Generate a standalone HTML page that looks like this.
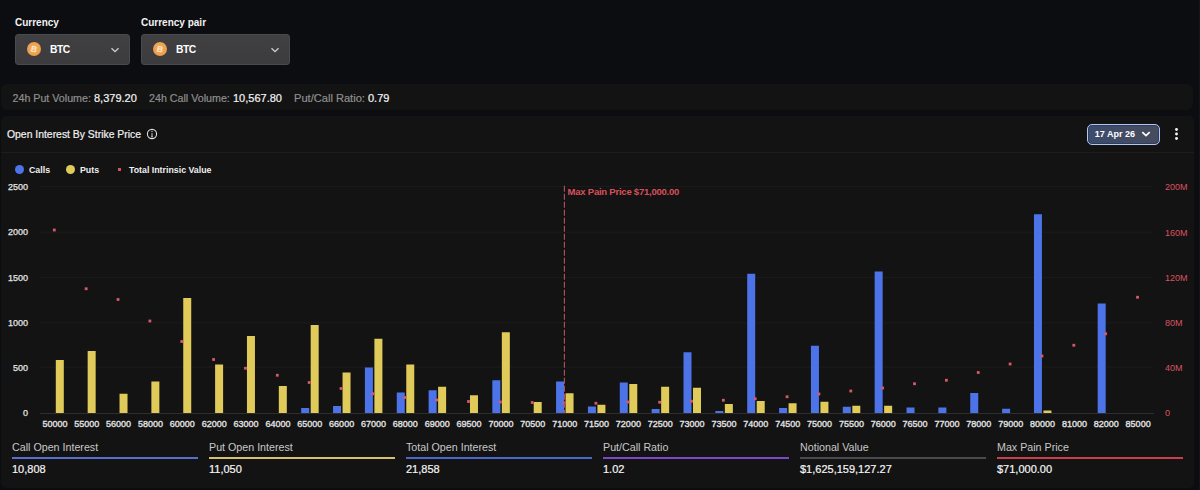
<!DOCTYPE html>
<html><head><meta charset="utf-8"><style>
*{margin:0;padding:0;box-sizing:border-box}
html,body{width:1200px;height:490px;overflow:hidden;background:#0c0d10;font-family:"Liberation Sans",sans-serif;color:#fff}
.abs{position:absolute}
.lab{position:absolute;font-size:10px;font-weight:bold;color:#f2f2f2;line-height:12px;white-space:nowrap}
.dd{position:absolute;top:34px;height:30.5px;border-radius:3px;background:linear-gradient(180deg,#403f42,#3c3b3e);border:1px solid #4a494c}
.coin{position:absolute;left:11px;top:7px;width:14px;height:14px;border-radius:50%;background:radial-gradient(circle at 50% 45%,#f4b066,#e8933a)}
.coin span{position:absolute;left:0;top:0;width:14px;height:14px;line-height:14px;text-align:center;font-size:8.5px;font-weight:bold;color:#fde8cc;transform:rotate(14deg)}
.ddt{position:absolute;left:34px;top:8.5px;font-size:10.3px;letter-spacing:-0.45px;font-weight:bold;color:#fff;line-height:12px}
.chev{position:absolute;top:12px}
.bar{position:absolute;left:1px;top:84px;width:1192px;height:26px;background:#131313;border-radius:6px}
.bar span{position:absolute;top:8px;font-size:11px;line-height:13px;white-space:nowrap}
.g{font-size:10.7px !important;color:#8f8f8f;-webkit-text-stroke:0.2px #8f8f8f} .w{color:#f4f4f4;-webkit-text-stroke:0.2px #f4f4f4}
.panel{position:absolute;left:1px;top:116px;width:1193px;height:372px;background:#131313;border-radius:5px}
.title{position:absolute;left:7px;top:128px;font-size:10.4px;line-height:13px;color:#f0f0f0;white-space:nowrap;-webkit-text-stroke:0.2px #f0f0f0}
.leg{position:absolute;top:165px;font-size:8.8px;font-weight:bold;color:#f0f0f0;line-height:11px;white-space:nowrap}
.xl{position:absolute;top:418.5px;width:40px;text-align:center;font-size:9px;color:#e2e2e2;line-height:11px;-webkit-text-stroke:0.35px #e2e2e2}
.yl{position:absolute;left:0;width:28px;text-align:right;font-size:9px;color:#e6e6e6;line-height:12px;-webkit-text-stroke:0.25px #e6e6e6}
.rl{position:absolute;left:1165px;font-size:9px;color:#dc5262;line-height:12px}
.st{position:absolute;top:440px;width:186px}
.stl{position:absolute;left:0;top:1px;font-size:10.7px;color:#c8c8c8;line-height:13px;white-space:nowrap}
.stb{position:absolute;left:0;top:17px;width:186px;height:2px}
.stv{position:absolute;left:0;top:23px;font-size:11px;color:#f6f6f6;line-height:13px;white-space:nowrap;-webkit-text-stroke:0.2px #f6f6f6}
.date{position:absolute;left:1087px;top:124px;width:73px;height:21px;border:1.8px solid #b2c6ee;border-radius:5px;background:linear-gradient(90deg,#3d4c6c,#474c5c);box-shadow:inset 0 0 0 1px #2c3c68}
.date span{position:absolute;left:6.8px;top:3.8px;font-size:9px;font-weight:bold;color:#fff;line-height:11px}
</style></head><body>
<div class="lab" style="left:15px;top:17px">Currency</div>
<div class="lab" style="left:141px;top:17px">Currency pair</div>
<div class="dd" style="left:15px;width:115px"><div class="coin"><span>B</span></div><div class="ddt">BTC</div>
<svg class="chev" style="left:94px" width="10" height="6" viewBox="0 0 10 6"><path d="M1.5 1.2 L5 4.6 L8.5 1.2" fill="none" stroke="#d0d0d0" stroke-width="1.3"/></svg></div>
<div class="dd" style="left:141px;width:149px"><div class="coin"><span>B</span></div><div class="ddt">BTC</div>
<svg class="chev" style="left:128px" width="10" height="6" viewBox="0 0 10 6"><path d="M1.5 1.2 L5 4.6 L8.5 1.2" fill="none" stroke="#d0d0d0" stroke-width="1.3"/></svg></div>

<div class="bar">
<span class="g" style="left:11.5px">24h Put Volume:</span><span class="w" style="left:93px">8,379.20</span>
<span class="g" style="left:148px">24h Call Volume:</span><span class="w" style="left:232px">10,567.80</span>
<span class="g" style="left:293px;font-size:11.1px !important">Put/Call Ratio:</span><span class="w" style="left:367px">0.79</span>
</div>

<div class="panel"></div>
<div class="title">Open Interest By Strike Price</div>
<svg class="abs" style="left:146px;top:128px" width="12" height="12" viewBox="0 0 12 12"><circle cx="6" cy="6" r="4.6" fill="none" stroke="#e0e0e0" stroke-width="1.1"/><circle cx="6" cy="3.6" r="0.65" fill="#e6e6e6"/><path d="M6 5.2 V8.8 M5.2 8.9 H6.8" stroke="#e6e6e6" stroke-width="0.9" fill="none"/></svg>
<div class="date"><span>17 Apr 26</span><svg class="abs" style="left:52.5px;top:6px" width="10" height="6" viewBox="0 0 10 6"><path d="M1.3 1.2 L5 4.7 L8.7 1.2" fill="none" stroke="#fff" stroke-width="1.7"/></svg></div>
<svg class="abs" style="left:1174px;top:126.5px" width="5" height="14"><circle cx="2.5" cy="2.5" r="1.45" fill="#f4f4f4"/><circle cx="2.5" cy="7" r="1.45" fill="#f4f4f4"/><circle cx="2.5" cy="11.5" r="1.45" fill="#f4f4f4"/></svg>
<div class="abs" style="left:1px;top:152px;width:1193px;height:1px;background:#1d1d1d"></div>

<svg class="abs" style="left:15px;top:165px" width="9" height="9"><circle cx="4.5" cy="4.5" r="4.5" fill="#4c74e8"/></svg>
<div class="leg" style="left:29px">Calls</div>
<svg class="abs" style="left:66px;top:165px" width="9" height="9"><circle cx="4.5" cy="4.5" r="4.5" fill="#dfca5a"/></svg>
<div class="leg" style="left:80px">Puts</div>
<div class="abs" style="left:118px;top:168px;width:3px;height:3px;background:#d8505a"></div>
<div class="leg" style="left:129px">Total Intrinsic Value</div>

<div class="abs" style="left:567.6px;top:185.5px;font-size:9.5px;letter-spacing:-0.23px;font-weight:bold;color:#d9505c;line-height:11px;white-space:nowrap">Max Pain Price $71,000.00</div>

<div class="yl" style="top:406.70px">0</div>
<div class="yl" style="top:361.84px">500</div>
<div class="yl" style="top:316.98px">1000</div>
<div class="yl" style="top:271.62px">1500</div>
<div class="yl" style="top:226.26px">2000</div>
<div class="yl" style="top:180.90px">2500</div>
<div class="rl" style="top:407.20px">0</div>
<div class="rl" style="top:361.84px">40M</div>
<div class="rl" style="top:317.48px">80M</div>
<div class="rl" style="top:272.12px">120M</div>
<div class="rl" style="top:226.76px">160M</div>
<div class="rl" style="top:181.40px">200M</div>
<svg class="abs" style="left:0;top:0" width="1200" height="490">
<rect x="40" y="366.70" width="1113" height="1" fill="#1c1c1c"/>
<rect x="40" y="322.30" width="1113" height="1" fill="#1c1c1c"/>
<rect x="40" y="276.90" width="1113" height="1" fill="#1c1c1c"/>
<rect x="40" y="231.70" width="1113" height="1" fill="#1c1c1c"/>
<rect x="40" y="185.90" width="1113" height="1" fill="#1c1c1c"/>
<rect x="40" y="413" width="1114" height="1" fill="#2e2e2e"/>
<rect x="55.80" y="360.00" width="8" height="53.00" fill="#dfca5a"/>
<rect x="87.66" y="351.00" width="8" height="62.00" fill="#dfca5a"/>
<rect x="119.52" y="393.75" width="8" height="19.25" fill="#dfca5a"/>
<rect x="151.38" y="381.50" width="8" height="31.50" fill="#dfca5a"/>
<rect x="183.24" y="298.00" width="8" height="115.00" fill="#dfca5a"/>
<rect x="215.10" y="364.50" width="8" height="48.50" fill="#dfca5a"/>
<rect x="246.96" y="336.00" width="8" height="77.00" fill="#dfca5a"/>
<rect x="278.82" y="386.00" width="8" height="27.00" fill="#dfca5a"/>
<rect x="301.18" y="408.00" width="8" height="5.00" fill="#4c74e8"/>
<rect x="310.68" y="325.00" width="8" height="88.00" fill="#dfca5a"/>
<rect x="333.04" y="406.00" width="8" height="7.00" fill="#4c74e8"/>
<rect x="342.54" y="372.50" width="8" height="40.50" fill="#dfca5a"/>
<rect x="364.90" y="367.50" width="8" height="45.50" fill="#4c74e8"/>
<rect x="374.40" y="338.75" width="8" height="74.25" fill="#dfca5a"/>
<rect x="396.76" y="392.50" width="8" height="20.50" fill="#4c74e8"/>
<rect x="406.26" y="364.50" width="8" height="48.50" fill="#dfca5a"/>
<rect x="428.62" y="390.25" width="8" height="22.75" fill="#4c74e8"/>
<rect x="438.12" y="386.75" width="8" height="26.25" fill="#dfca5a"/>
<rect x="469.98" y="395.25" width="8" height="17.75" fill="#dfca5a"/>
<rect x="492.34" y="380.25" width="8" height="32.75" fill="#4c74e8"/>
<rect x="501.84" y="332.25" width="8" height="80.75" fill="#dfca5a"/>
<rect x="533.70" y="402.00" width="8" height="11.00" fill="#dfca5a"/>
<rect x="556.06" y="381.50" width="8" height="31.50" fill="#4c74e8"/>
<rect x="565.56" y="393.25" width="8" height="19.75" fill="#dfca5a"/>
<rect x="587.92" y="406.50" width="8" height="6.50" fill="#4c74e8"/>
<rect x="597.42" y="404.75" width="8" height="8.25" fill="#dfca5a"/>
<rect x="619.78" y="382.50" width="8" height="30.50" fill="#4c74e8"/>
<rect x="629.28" y="384.00" width="8" height="29.00" fill="#dfca5a"/>
<rect x="651.64" y="409.00" width="8" height="4.00" fill="#4c74e8"/>
<rect x="661.14" y="386.75" width="8" height="26.25" fill="#dfca5a"/>
<rect x="683.50" y="352.25" width="8" height="60.75" fill="#4c74e8"/>
<rect x="693.00" y="387.75" width="8" height="25.25" fill="#dfca5a"/>
<rect x="715.36" y="411.00" width="8" height="2.00" fill="#4c74e8"/>
<rect x="724.86" y="404.00" width="8" height="9.00" fill="#dfca5a"/>
<rect x="747.22" y="273.75" width="8" height="139.25" fill="#4c74e8"/>
<rect x="756.72" y="401.00" width="8" height="12.00" fill="#dfca5a"/>
<rect x="779.08" y="408.00" width="8" height="5.00" fill="#4c74e8"/>
<rect x="788.58" y="403.25" width="8" height="9.75" fill="#dfca5a"/>
<rect x="810.94" y="345.75" width="8" height="67.25" fill="#4c74e8"/>
<rect x="820.44" y="401.75" width="8" height="11.25" fill="#dfca5a"/>
<rect x="842.80" y="406.75" width="8" height="6.25" fill="#4c74e8"/>
<rect x="852.30" y="405.75" width="8" height="7.25" fill="#dfca5a"/>
<rect x="874.66" y="271.50" width="8" height="141.50" fill="#4c74e8"/>
<rect x="884.16" y="405.75" width="8" height="7.25" fill="#dfca5a"/>
<rect x="906.52" y="407.50" width="8" height="5.50" fill="#4c74e8"/>
<rect x="938.38" y="407.50" width="8" height="5.50" fill="#4c74e8"/>
<rect x="970.24" y="393.00" width="8" height="20.00" fill="#4c74e8"/>
<rect x="1002.10" y="408.75" width="8" height="4.25" fill="#4c74e8"/>
<rect x="1033.96" y="214.25" width="8" height="198.75" fill="#4c74e8"/>
<rect x="1043.46" y="410.50" width="8" height="2.50" fill="#dfca5a"/>
<rect x="1097.68" y="303.50" width="8" height="109.50" fill="#4c74e8"/>
<rect x="52.90" y="228.60" width="2.8" height="2.8" fill="#d95868"/>
<rect x="84.76" y="287.35" width="2.8" height="2.8" fill="#d95868"/>
<rect x="116.62" y="298.10" width="2.8" height="2.8" fill="#d95868"/>
<rect x="148.48" y="319.60" width="2.8" height="2.8" fill="#d95868"/>
<rect x="180.34" y="340.10" width="2.8" height="2.8" fill="#d95868"/>
<rect x="212.20" y="358.10" width="2.8" height="2.8" fill="#d95868"/>
<rect x="244.06" y="366.85" width="2.8" height="2.8" fill="#d95868"/>
<rect x="275.92" y="373.85" width="2.8" height="2.8" fill="#d95868"/>
<rect x="307.78" y="381.10" width="2.8" height="2.8" fill="#d95868"/>
<rect x="339.64" y="387.10" width="2.8" height="2.8" fill="#d95868"/>
<rect x="371.50" y="392.35" width="2.8" height="2.8" fill="#d95868"/>
<rect x="403.36" y="396.10" width="2.8" height="2.8" fill="#d95868"/>
<rect x="435.22" y="398.60" width="2.8" height="2.8" fill="#d95868"/>
<rect x="467.08" y="400.10" width="2.8" height="2.8" fill="#d95868"/>
<rect x="498.94" y="400.60" width="2.8" height="2.8" fill="#d95868"/>
<rect x="530.80" y="401.10" width="2.8" height="2.8" fill="#d95868"/>
<rect x="562.66" y="401.35" width="2.8" height="2.8" fill="#d95868"/>
<rect x="594.52" y="401.85" width="2.8" height="2.8" fill="#d95868"/>
<rect x="626.38" y="400.60" width="2.8" height="2.8" fill="#d95868"/>
<rect x="658.24" y="400.85" width="2.8" height="2.8" fill="#d95868"/>
<rect x="690.10" y="399.85" width="2.8" height="2.8" fill="#d95868"/>
<rect x="721.96" y="398.85" width="2.8" height="2.8" fill="#d95868"/>
<rect x="753.82" y="397.35" width="2.8" height="2.8" fill="#d95868"/>
<rect x="785.68" y="395.35" width="2.8" height="2.8" fill="#d95868"/>
<rect x="817.54" y="392.60" width="2.8" height="2.8" fill="#d95868"/>
<rect x="849.40" y="389.60" width="2.8" height="2.8" fill="#d95868"/>
<rect x="881.26" y="386.60" width="2.8" height="2.8" fill="#d95868"/>
<rect x="913.12" y="382.35" width="2.8" height="2.8" fill="#d95868"/>
<rect x="944.98" y="378.85" width="2.8" height="2.8" fill="#d95868"/>
<rect x="976.84" y="371.10" width="2.8" height="2.8" fill="#d95868"/>
<rect x="1008.70" y="362.60" width="2.8" height="2.8" fill="#d95868"/>
<rect x="1040.56" y="354.60" width="2.8" height="2.8" fill="#d95868"/>
<rect x="1072.42" y="343.85" width="2.8" height="2.8" fill="#d95868"/>
<rect x="1104.28" y="332.35" width="2.8" height="2.8" fill="#d95868"/>
<rect x="1136.14" y="295.85" width="2.8" height="2.8" fill="#d95868"/>
<line x1="564.4" y1="185.8" x2="564.4" y2="413" stroke="#b8505e" stroke-width="1.1" stroke-dasharray="6,2"/>
</svg>
<div class="xl" style="left:34.90px">50000</div>
<div class="xl" style="left:66.76px">55000</div>
<div class="xl" style="left:98.62px">56000</div>
<div class="xl" style="left:130.48px">58000</div>
<div class="xl" style="left:162.34px">60000</div>
<div class="xl" style="left:194.20px">62000</div>
<div class="xl" style="left:226.06px">63000</div>
<div class="xl" style="left:257.92px">64000</div>
<div class="xl" style="left:289.78px">65000</div>
<div class="xl" style="left:321.64px">66000</div>
<div class="xl" style="left:353.50px">67000</div>
<div class="xl" style="left:385.36px">68000</div>
<div class="xl" style="left:417.22px">69000</div>
<div class="xl" style="left:449.08px">69500</div>
<div class="xl" style="left:480.94px">70000</div>
<div class="xl" style="left:512.80px">70500</div>
<div class="xl" style="left:544.66px">71000</div>
<div class="xl" style="left:576.52px">71500</div>
<div class="xl" style="left:608.38px">72000</div>
<div class="xl" style="left:640.24px">72500</div>
<div class="xl" style="left:672.10px">73000</div>
<div class="xl" style="left:703.96px">73500</div>
<div class="xl" style="left:735.82px">74000</div>
<div class="xl" style="left:767.68px">74500</div>
<div class="xl" style="left:799.54px">75000</div>
<div class="xl" style="left:831.40px">75500</div>
<div class="xl" style="left:863.26px">76000</div>
<div class="xl" style="left:895.12px">76500</div>
<div class="xl" style="left:926.98px">77000</div>
<div class="xl" style="left:958.84px">78000</div>
<div class="xl" style="left:990.70px">79000</div>
<div class="xl" style="left:1022.56px">80000</div>
<div class="xl" style="left:1054.42px">81000</div>
<div class="xl" style="left:1086.28px">82000</div>
<div class="xl" style="left:1118.14px">85000</div>
<div class="st" style="left:12px"><div class="stl">Call Open Interest</div><div class="stb" style="background:#5670cc"></div><div class="stv">10,808</div></div>
<div class="st" style="left:209px"><div class="stl">Put Open Interest</div><div class="stb" style="background:#d8c070"></div><div class="stv">11,050</div></div>
<div class="st" style="left:406px"><div class="stl">Total Open Interest</div><div class="stb" style="background:#4a68cc"></div><div class="stv">21,858</div></div>
<div class="st" style="left:603px"><div class="stl">Put/Call Ratio</div><div class="stb" style="background:#7e46c8"></div><div class="stv">1.02</div></div>
<div class="st" style="left:800px"><div class="stl">Notional Value</div><div class="stb" style="background:#4a4a4e"></div><div class="stv">$1,625,159,127.27</div></div>
<div class="st" style="left:997px"><div class="stl">Max Pain Price</div><div class="stb" style="background:#c8404a"></div><div class="stv">$71,000.00</div></div>
<div class="abs" style="left:1199px;top:0;width:1px;height:490px;background:#151517"></div>
</body></html>
